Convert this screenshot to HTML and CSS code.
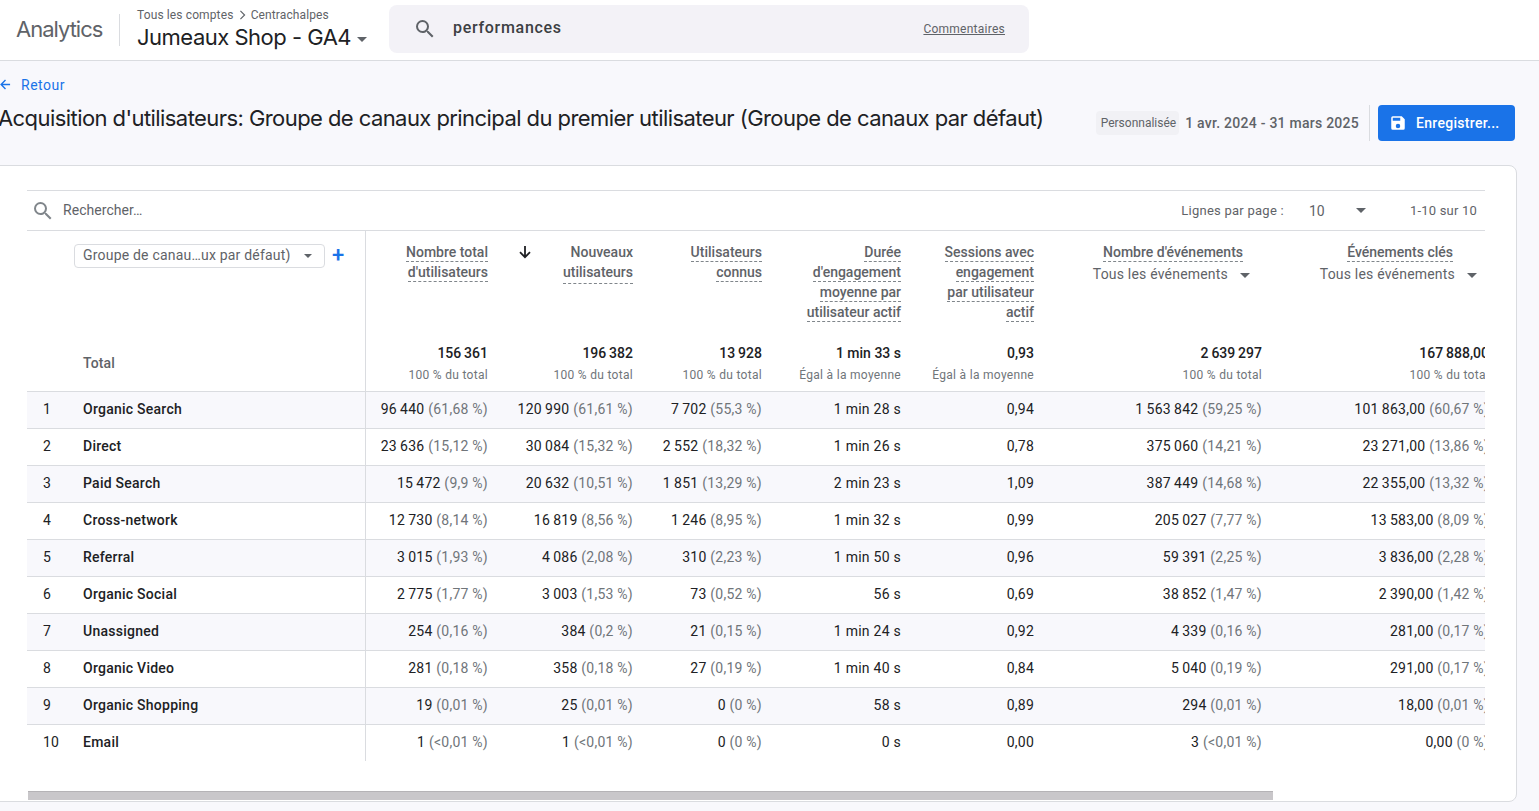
FILE: index.html
```html
<!DOCTYPE html>
<html lang="fr">
<head>
<meta charset="utf-8">
<title>Acquisition d'utilisateurs</title>
<link rel="stylesheet" href="styles.css">
</head>
<body>
<header class="topbar">
  <div class="brand">Analytics</div>
  <div class="account">
    <div class="crumbs">Tous les comptes <svg class="chev" viewBox="0 0 8 12" width="7" height="10"><path d="M1.5 1l5 5-5 5" fill="none" stroke="#5f6368" stroke-width="1.4"/></svg> Centrachalpes</div>
    <div class="property">Jumeaux Shop - GA4 <span class="caret caret-dark"></span></div>
  </div>
  <div class="searchbox">
    <svg class="sicon" viewBox="0 0 24 24" width="24" height="24"><path fill="#5f6368" d="M15.5 14h-.79l-.28-.27A6.47 6.47 0 0 0 16 9.5 6.5 6.5 0 1 0 9.5 16c1.61 0 3.09-.59 4.23-1.57l.27.28v.79l5 4.99L20.49 19l-4.99-5zm-6 0C7.01 14 5 11.99 5 9.5S7.01 5 9.5 5 14 7.01 14 9.5 11.99 14 9.5 14z"/></svg>
    <span class="query">performances</span>
    <a class="feedback">Commentaires</a>
  </div>
</header>
<main class="main">
  <a class="back"><svg viewBox="0 0 12 12" width="11" height="11"><path d="M11 6H1.5M6 1.2L1.2 6 6 10.8" fill="none" stroke="#1a73e8" stroke-width="1.5"/></svg><span>Retour</span></a>
  <div class="titlerow">
    <h1 class="title">Acquisition d'utilisateurs: Groupe de canaux principal du premier utilisateur (Groupe de canaux par défaut)</h1>
    <div class="actions">
      <span class="chip">Personnalisée</span>
      <span class="dates">1 avr. 2024 - 31 mars 2025</span>
      <span class="vsep"></span>
      <button class="save"><svg viewBox="0 0 24 24" width="18" height="18"><path fill="#fff" d="M17 3H5a2 2 0 0 0-2 2v14a2 2 0 0 0 2 2h14a2 2 0 0 0 2-2V7l-4-4zm-5 16a3 3 0 1 1 0-6 3 3 0 0 1 0 6zm3-10H5V5h10v4z"/></svg>Enregistrer...</button>
    </div>
  </div>
  <section class="card">
    <div class="tablewrap">
      <div class="toolbar">
        <svg viewBox="0 0 24 24" width="24" height="24"><path fill="#80868b" d="M15.5 14h-.79l-.28-.27A6.47 6.47 0 0 0 16 9.5 6.5 6.5 0 1 0 9.5 16c1.61 0 3.09-.59 4.23-1.57l.27.28v.79l5 4.99L20.49 19l-4.99-5zm-6 0C7.01 14 5 11.99 5 9.5S7.01 5 9.5 5 14 7.01 14 9.5 11.99 14 9.5 14z"/></svg>
        <span class="find">Rechercher…</span>
        <span class="perpage">Lignes par page :</span>
        <span class="pagesize">10</span>
        <span class="caret"></span>
        <span class="range">1-10 sur 10</span>
      </div>
      <table class="report">
        <colgroup><col class="c-dim"><col class="c1"><col class="c2"><col class="c3"><col class="c4"><col class="c5"><col class="c6"><col class="c7"></colgroup>
        <thead>
          <tr class="heads">
            <th class="dim">
              <div class="dimpick"><span class="select">Groupe de canau…ux par défaut)<span class="caret"></span></span><span class="plus">+</span></div>
            </th>
            <th><span class="h">Nombre total<br>d'utilisateurs</span></th>
            <th><div class="sorted"><svg viewBox="0 0 14 14" width="14" height="14"><path d="M7 1v11M2 7.2L7 12.2 12 7.2" fill="none" stroke="#202124" stroke-width="1.8"/></svg><span class="h">Nouveaux<br>utilisateurs</span></div></th>
            <th><span class="h">Utilisateurs<br>connus</span></th>
            <th><span class="h">Durée<br>d'engagement<br>moyenne par<br>utilisateur actif</span></th>
            <th><span class="h">Sessions avec<br>engagement<br>par utilisateur<br>actif</span></th>
            <th><span class="h h-events">Nombre d'événements</span><div class="evt">Tous les événements<span class="caret"></span></div></th>
            <th><span class="h h-keys">Événements clés</span><div class="evt">Tous les événements<span class="caret"></span></div></th>
          </tr>
          <tr class="totals">
            <th class="dim total">Total</th>
            <td><b>156&#8201;361</b><small>100 % du total</small></td>
            <td><b>196&#8201;382</b><small>100 % du total</small></td>
            <td><b>13&#8201;928</b><small>100 % du total</small></td>
            <td><b>1 min 33 s</b><small>Égal à la moyenne</small></td>
            <td><b>0,93</b><small>Égal à la moyenne</small></td>
            <td><b>2&#8201;639&#8201;297</b><small>100 % du total</small></td>
            <td><b>167&#8201;888,00</b><small>100 % du total</small></td>
          </tr>
        </thead>
        <tbody>
          <tr><th class="dim"><span class="idx">1</span>Organic Search</th><td>96&#8201;440 <i>(61,68 %)</i></td><td>120&#8201;990 <i>(61,61 %)</i></td><td>7&#8201;702 <i>(55,3 %)</i></td><td>1 min 28 s</td><td>0,94</td><td>1&#8201;563&#8201;842 <i>(59,25 %)</i></td><td>101&#8201;863,00 <i>(60,67 %)</i></td></tr>
          <tr><th class="dim"><span class="idx">2</span>Direct</th><td>23&#8201;636 <i>(15,12 %)</i></td><td>30&#8201;084 <i>(15,32 %)</i></td><td>2&#8201;552 <i>(18,32 %)</i></td><td>1 min 26 s</td><td>0,78</td><td>375&#8201;060 <i>(14,21 %)</i></td><td>23&#8201;271,00 <i>(13,86 %)</i></td></tr>
          <tr><th class="dim"><span class="idx">3</span>Paid Search</th><td>15&#8201;472 <i>(9,9 %)</i></td><td>20&#8201;632 <i>(10,51 %)</i></td><td>1&#8201;851 <i>(13,29 %)</i></td><td>2 min 23 s</td><td>1,09</td><td>387&#8201;449 <i>(14,68 %)</i></td><td>22&#8201;355,00 <i>(13,32 %)</i></td></tr>
          <tr><th class="dim"><span class="idx">4</span>Cross-network</th><td>12&#8201;730 <i>(8,14 %)</i></td><td>16&#8201;819 <i>(8,56 %)</i></td><td>1&#8201;246 <i>(8,95 %)</i></td><td>1 min 32 s</td><td>0,99</td><td>205&#8201;027 <i>(7,77 %)</i></td><td>13&#8201;583,00 <i>(8,09 %)</i></td></tr>
          <tr><th class="dim"><span class="idx">5</span>Referral</th><td>3&#8201;015 <i>(1,93 %)</i></td><td>4&#8201;086 <i>(2,08 %)</i></td><td>310 <i>(2,23 %)</i></td><td>1 min 50 s</td><td>0,96</td><td>59&#8201;391 <i>(2,25 %)</i></td><td>3&#8201;836,00 <i>(2,28 %)</i></td></tr>
          <tr><th class="dim"><span class="idx">6</span>Organic Social</th><td>2&#8201;775 <i>(1,77 %)</i></td><td>3&#8201;003 <i>(1,53 %)</i></td><td>73 <i>(0,52 %)</i></td><td>56 s</td><td>0,69</td><td>38&#8201;852 <i>(1,47 %)</i></td><td>2&#8201;390,00 <i>(1,42 %)</i></td></tr>
          <tr><th class="dim"><span class="idx">7</span>Unassigned</th><td>254 <i>(0,16 %)</i></td><td>384 <i>(0,2 %)</i></td><td>21 <i>(0,15 %)</i></td><td>1 min 24 s</td><td>0,92</td><td>4&#8201;339 <i>(0,16 %)</i></td><td>281,00 <i>(0,17 %)</i></td></tr>
          <tr><th class="dim"><span class="idx">8</span>Organic Video</th><td>281 <i>(0,18 %)</i></td><td>358 <i>(0,18 %)</i></td><td>27 <i>(0,19 %)</i></td><td>1 min 40 s</td><td>0,84</td><td>5&#8201;040 <i>(0,19 %)</i></td><td>291,00 <i>(0,17 %)</i></td></tr>
          <tr><th class="dim"><span class="idx">9</span>Organic Shopping</th><td>19 <i>(0,01 %)</i></td><td>25 <i>(0,01 %)</i></td><td>0 <i>(0 %)</i></td><td>58 s</td><td>0,89</td><td>294 <i>(0,01 %)</i></td><td>18,00 <i>(0,01 %)</i></td></tr>
          <tr><th class="dim"><span class="idx">10</span>Email</th><td>1 <i>(&lt;0,01 %)</i></td><td>1 <i>(&lt;0,01 %)</i></td><td>0 <i>(0 %)</i></td><td>0 s</td><td>0,00</td><td>3 <i>(&lt;0,01 %)</i></td><td>0,00 <i>(0 %)</i></td></tr>
        </tbody>
      </table>
    </div>
    <div class="hscroll"><div class="thumb"></div></div>
  </section>
</main>
</body>
</html>
```
FILE: styles.css
```css
* { box-sizing: border-box; }
html, body { margin: 0; height: 811px; overflow: hidden; }
body { background: #f8f8fc; font-family: Roboto, "Liberation Sans", sans-serif; font-size: 14px; color: #202124; }

.topbar { height: 61px; background: #fff; border-bottom: 1px solid #dadce0; display: flex; align-items: center; padding-left: 16px; }
.brand { font-size: 22px; color: #5f6368; width: 104px; height: 32px; line-height: 30px; border-right: 1px solid #dadce0; flex: none; font-family: "Inter", sans-serif; letter-spacing: -1px; }
.account { margin-left: 17px; width: 252px; flex: none; }
.crumbs { font-size: 12px; color: #5f6368; line-height: 16px; margin-top: -2px; letter-spacing: .12px; }
.chev { vertical-align: -1px; margin: 0 2px; }
.property { font-size: 22px; line-height: 28px; color: #202124; font-family: "Inter", sans-serif; letter-spacing: -.5px; white-space: nowrap; }
.caret { display: inline-block; width: 0; height: 0; border-left: 5px solid transparent; border-right: 5px solid transparent; border-top: 5px solid #5f6368; vertical-align: middle; }
.caret-dark { vertical-align: 3px; }
.searchbox { width: 640px; height: 48px; margin-top: -3px; background: #f3f2f7; border-radius: 8px; display: flex; align-items: center; padding: 0 24px; flex: none; }
.sicon { margin-right: 16px; flex: none; }
.query { font-size: 16px; font-weight: 500; color: #3c4043; letter-spacing: .7px; margin-bottom: 2px; }
.feedback { margin-left: auto; font-size: 12px; color: #5f6368; text-decoration: underline; letter-spacing: .25px; }

.back { display: flex; align-items: center; gap: 10px; color: #1a73e8; font-size: 14px; margin-top: 15px; height: 17px; letter-spacing: .5px; }
.titlerow { display: flex; align-items: center; height: 44px; margin-top: 8px; padding-right: 24px; }
.title { font-weight: 400; font-size: 22px; font-family: "Inter", sans-serif; letter-spacing: -.57px; margin: -10px 0 0 -2px; white-space: nowrap; color: #202124; }
.actions { margin-left: auto; display: flex; align-items: center; height: 36px; }
.chip { background: #f1f1f5; font-size: 12px; color: #5f6368; height: 24px; line-height: 24px; padding: 0 3px 0 5px; border-radius: 4px; }
.dates { font-weight: 500; font-size: 14px; color: #5f6368; margin-left: 6px; letter-spacing: .25px; }
.vsep { width: 1px; height: 36px; background: #dadce0; margin: 0 8px 0 10px; }
.save { width: 137px; height: 36px; background: #1a73e8; border: 0; border-radius: 4px; color: #fff; font: 500 14px Roboto, sans-serif; letter-spacing: .3px; display: flex; align-items: center; gap: 9px; padding: 0 0 0 11px; }

.card { margin: 20px 22px 0 -20px; height: 637px; background: #fff; border: 1px solid #dadce0; border-radius: 8px; padding: 24px 31px 0 46px; }
.tablewrap { overflow: hidden; border-top: 1px solid #dadce0; }
.toolbar { height: 40px; display: flex; align-items: center; padding-left: 4px; border-bottom: 1px solid #dadce0; color: #5f6368; font-size: 13px; }
.find { margin: 0 0 2px 8px; font-size: 14px; letter-spacing: .05px; }
.perpage { margin-left: auto; letter-spacing: .25px; }
.pagesize { margin-left: 25px; width: 47px; font-size: 14px; }
.range { margin-left: 44px; margin-right: 8px; letter-spacing: .2px; }

.report { table-layout: fixed; width: 1462px; border-collapse: separate; border-spacing: 0; }
.c-dim { width: 339px; } .c1 { width: 122px; } .c2 { width: 145px; } .c3 { width: 129px; }
.c4 { width: 139px; } .c5 { width: 133px; } .c6 { width: 228px; } .c7 { width: 227px; }
.report th, .report td { padding: 0; text-align: right; font-weight: 400; white-space: nowrap; }
.report .dim { text-align: left; border-right: 1px solid #dadce0; }
.heads th { height: 107px; vertical-align: top; padding-top: 11px; line-height: 20px; color: #5f6368; }
.report .heads .dim { padding: 13px 0 0 47px; }
.h { font-weight: 500; color: #5f6368; border-bottom: 1px dashed #80868b; padding-bottom: 1px; }
.h-events { margin-right: 19px; }
.h-keys { margin-right: 36px; }
.sorted { display: flex; justify-content: space-between; padding-left: 30px; text-align: right; }
.sorted svg { margin-top: 3px; flex: none; }
.evt { padding-right: 12px; margin-top: 2px; line-height: 20px; color: #5f6368; font-weight: 400; letter-spacing: .2px; }
.evt .caret { margin-left: 12px; }
.dimpick { display: flex; align-items: center; }
.select { width: 251px; height: 24px; border: 1px solid #dadce0; border-radius: 4px; padding: 0 0 2px 8px; color: #5f6368; letter-spacing: .2px; display: flex; align-items: center; }
.select .caret { margin: 2px 0 0 13px; border-width: 4px 4px 0; }
.plus { color: #1a73e8; font-size: 22px; font-weight: 500; margin: -2px 0 0 7px; line-height: 22px; }
.report .totals th, .report .totals td { height: 54px; border-bottom: 1px solid #dadce0; vertical-align: top; padding-top: 6px; }
.report .totals .total { padding: 17px 0 0 56px; font-weight: 500; color: #5f6368; letter-spacing: .1px; }
.totals b { display: block; font-weight: 500; line-height: 18px; }
.totals small { display: block; font-size: 12px; line-height: 16px; margin-top: 5px; color: #70757a; letter-spacing: .3px; }
tbody tr { height: 37px; }
tbody tr:nth-child(odd) { background: #f8f8fc; }
tbody th, tbody td { border-bottom: 1px solid #dadce0; }
tbody tr:last-child { height: 36px; }
tbody tr:last-child th, tbody tr:last-child td { border-bottom: 0; }
.report tbody th, .report tbody td { padding-bottom: 2px; letter-spacing: .25px; }
.report tbody .dim { font-weight: 500; padding-left: 16px; }
.idx { display: inline-block; width: 40px; font-weight: 400; }
i { font-style: normal; color: #70757a; }
.hscroll { margin: 30px 0 0 1px; width: 1440px; height: 9px; }
.thumb { width: 1245px; height: 9px; background: #c9c7ca; border-top: 1px solid #b5b3b6; }
```
